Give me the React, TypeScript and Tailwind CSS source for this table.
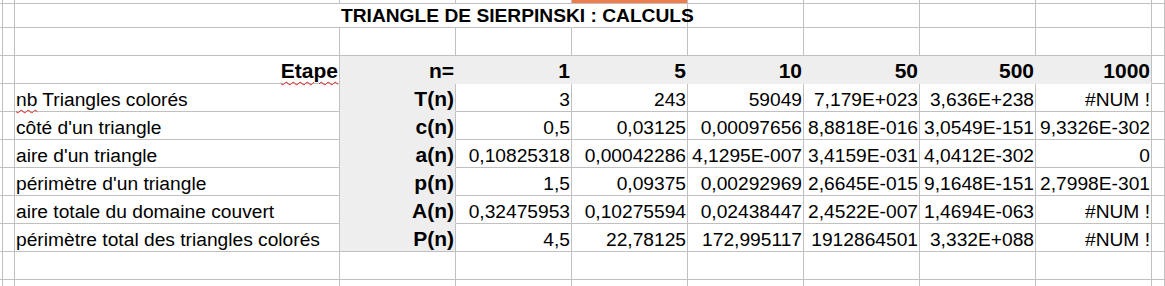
import type { ReactNode } from 'react';

const steps = ['1', '5', '10', '50', '500', '1000'];

const rows = [
    { label: 'nb Triangles colorés', key: 'T(n)', values: ['3', '243', '59049', '7,179E+023', '3,636E+238', '#NUM !'], spell: true },
    { label: "côté d'un triangle", key: 'c(n)', values: ['0,5', '0,03125', '0,00097656', '8,8818E-016', '3,0549E-151', '9,3326E-302'] },
    { label: "aire d'un triangle", key: 'a(n)', values: ['0,10825318', '0,00042286', '4,1295E-007', '3,4159E-031', '4,0412E-302', '0'] },
    { label: "périmètre d'un triangle", key: 'p(n)', values: ['1,5', '0,09375', '0,00292969', '2,6645E-015', '9,1648E-151', '2,7998E-301'] },
    { label: 'aire totale du domaine couvert', key: 'A(n)', values: ['0,32475953', '0,10275594', '0,02438447', '2,4522E-007', '1,4694E-063', '#NUM !'] },
    { label: 'périmètre total des triangles colorés', key: 'P(n)', values: ['4,5', '22,78125', '172,995117', '1912864501', '3,332E+088', '#NUM !'] },
];

// plain spreadsheet cell: grid line on the right and bottom
function Cell({ children, className = '' }: { children?: ReactNode; className?: string }) {
    return (
        <div className={`flex items-end overflow-visible whitespace-nowrap border-r border-b border-[#c0c0c0] leading-[normal] ${className}`}>
            {children}
        </div>
    );
}

function Spell({ children }: { children: ReactNode }) {
    return (
        <span className="underline decoration-wavy decoration-[#e0201b] decoration-1 underline-offset-[3px]">
            {children}
        </span>
    );
}

function EmptyRow({ last = false }: { last?: boolean }) {
    return (
        <>
            {Array.from({ length: 11 }).map((_, i) => (
                <Cell key={i} className={last ? 'border-b-0' : ''} />
            ))}
        </>
    );
}

export default function App() {
    return (
        <div className="h-[286px] w-[1165px] overflow-hidden bg-white text-black font-['Liberation_Sans',Arial,sans-serif]">
            <div className="grid grid-cols-[3px_12px_325px_116px_116px_116px_116px_116px_116px_116px_1fr] grid-rows-[4px_24px_28px_28px_28px_28px_28px_28px_28px_28px_28px_1fr] h-full">
                {/* row above the title, column E is selected */}
                <Cell />
                <Cell />
                <Cell />
                <Cell />
                <Cell />
                <Cell className="bg-[#ef7d4b] border-r-[#c0c0c0]" />
                <Cell />
                <Cell />
                <Cell />
                <Cell />
                <Cell />

                {/* title */}
                <Cell />
                <Cell />
                <Cell className="border-r-0 pr-px" />
                <Cell className="relative z-10 border-r-0 pl-px pr-px">
                    <span className="text-[19.2px] font-bold">TRIANGLE DE SIERPINSKI : CALCULS</span>
                </Cell>
                <Cell className="border-r-transparent" />
                <Cell />
                <Cell />
                <Cell />
                <Cell />
                <Cell />
                <Cell />

                <EmptyRow />

                {/* step header */}
                <Cell />
                <Cell />
                <Cell className="justify-end pr-px text-[21px] font-bold">
                    <Spell>Etape</Spell>
                </Cell>
                <Cell className="justify-end bg-[#eeeeee] border-r-[#eeeeee] border-b-[#eeeeee] pr-px text-[21px] font-bold">n=</Cell>
                {steps.map((s, i) => (
                    <Cell
                        key={s}
                        className={`justify-end bg-[#eeeeee] border-b-[#eeeeee] pr-px text-[21px] font-bold ${i < 5 ? 'border-r-[#eeeeee]' : ''}`}
                    >
                        {s}
                    </Cell>
                ))}
                <Cell />

                {rows.map((row, r) => (
                    <div key={row.key} className="contents">
                        <Cell />
                        <Cell />
                        <Cell className="pl-px text-[19.2px]">
                            {row.spell ? (
                                <span>
                                    <Spell>nb</Spell> Triangles colorés
                                </span>
                            ) : (
                                row.label
                            )}
                        </Cell>
                        <Cell className={`justify-end bg-[#eeeeee] pr-px text-[21px] font-bold ${r < 5 ? 'border-b-[#eeeeee]' : ''}`}>
                            {row.key}
                        </Cell>
                        {row.values.map((v, i) => (
                            <Cell key={i} className="justify-end pr-px text-[19.2px]">
                                {v}
                            </Cell>
                        ))}
                        <Cell />
                    </div>
                ))}

                <EmptyRow />
                <EmptyRow last />
            </div>
        </div>
    );
}
